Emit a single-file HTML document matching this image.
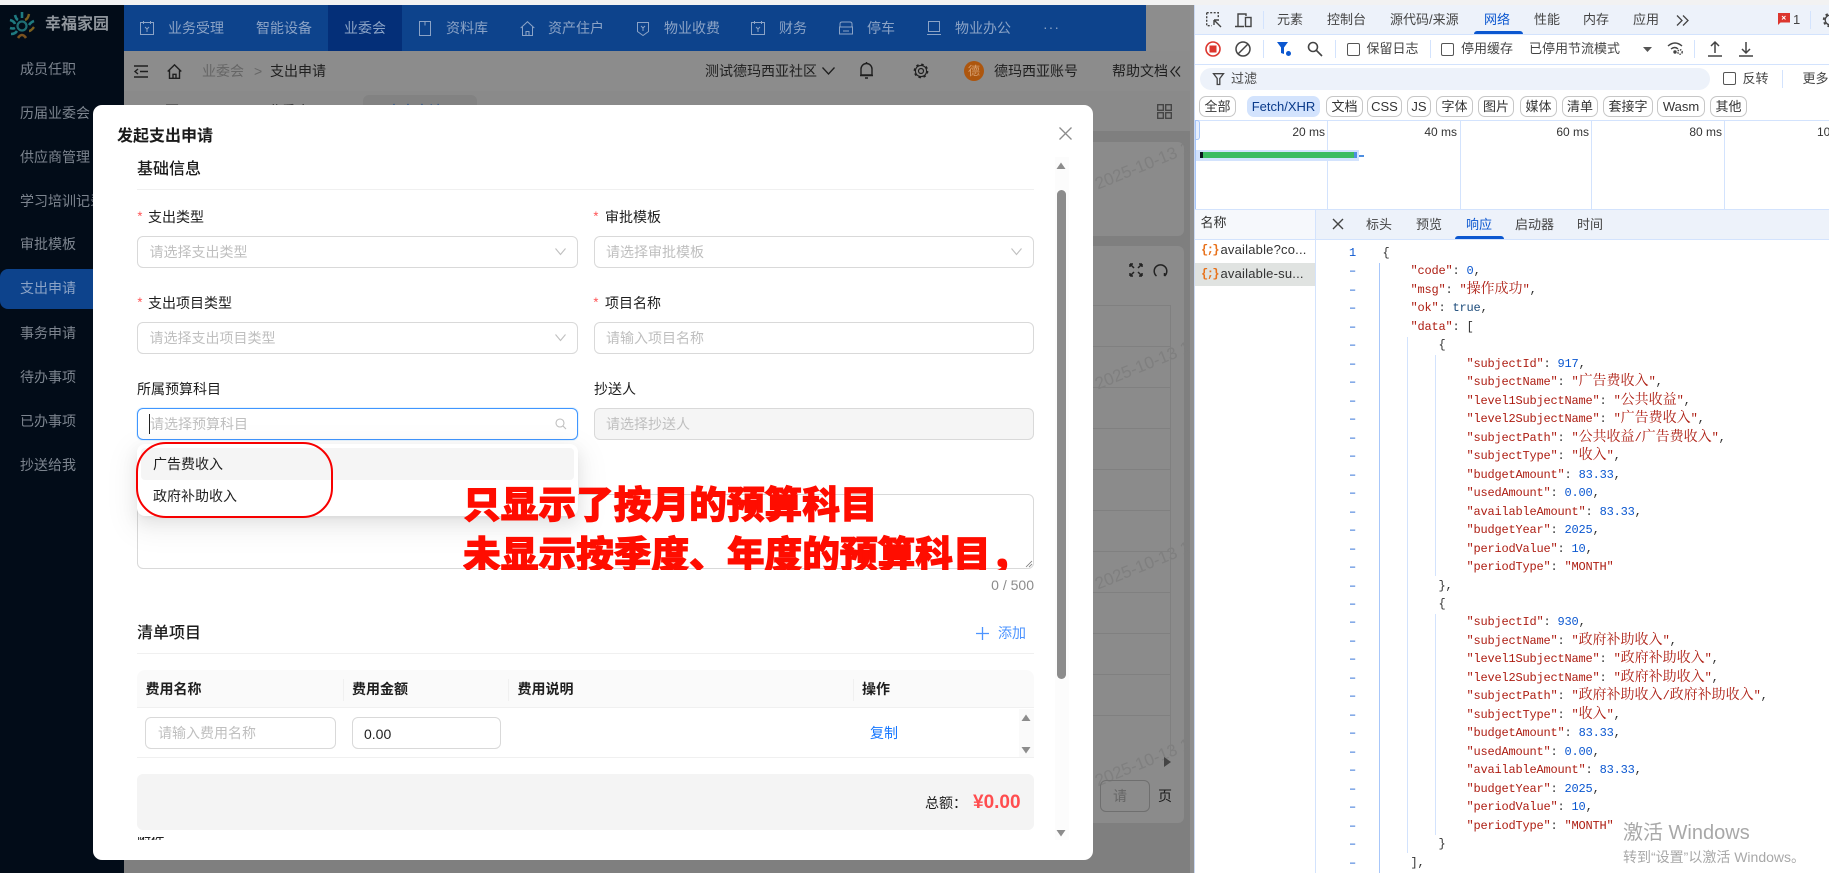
<!DOCTYPE html>
<html lang="zh-CN">
<head>
<meta charset="utf-8">
<title>发起支出申请</title>
<style>
*{box-sizing:border-box}
html,body{margin:0;padding:0;width:1829px;height:873px;overflow:hidden;background:#fff}
body{position:relative;font-family:"Liberation Sans","Noto Sans CJK SC",sans-serif;font-size:14px;color:#1f1f1f}
.a{position:absolute}
.t{position:absolute;line-height:20px;white-space:nowrap;height:20px}
svg{position:absolute;overflow:visible;fill:none}
.nav{color:#8ba3c6}
.side{color:#7d858f;left:20px}
.lab{color:#1d1d1d}
.star{color:#ff4d4f;font-family:"Liberation Mono",monospace;font-size:13px}
.ph{color:#bfbfbf}
.in{position:absolute;border:1px solid #d9d9d9;border-radius:6px;background:#fff}
.chip{position:absolute;top:96px;height:21px;border:1px solid #c7c7c7;border-radius:7px;font-size:13px;line-height:19px;text-align:center;color:#333;background:#fff;white-space:nowrap}
.tab{position:absolute;line-height:18px;font-size:13px;color:#444;white-space:nowrap}
.code{position:absolute;margin:0;font-family:"Liberation Mono","Noto Serif CJK SC",monospace;font-size:12px;letter-spacing:-.2px;line-height:18.48px;color:#333;white-space:pre}
.code i{font-style:normal;color:#ad1d12}
.code b{font-weight:400;color:#0b57d0}
.code u{text-decoration:none;font-family:"Noto Serif CJK SC",serif;font-size:14px;letter-spacing:0;color:#ad1d12;line-height:1}
.grid{position:absolute;top:120px;height:89px;width:1px;background:#d3e3fd}
.ms{position:absolute;top:124px;font-size:12px;line-height:16px;color:#333;text-align:right;white-space:nowrap}
.sep{position:absolute;width:1px;background:#d3e3fd}
.cb{position:absolute;width:13px;height:13px;border:1.5px solid #555;border-radius:2px;background:#fff}
.wm{position:absolute;left:1096px;line-height:20px;height:20px;white-space:nowrap;color:#7f7f7f;font-size:17px;transform:rotate(-22deg);transform-origin:left center}
</style>
</head>
<body>
<!-- page behind overlay -->
<div class="a" style="left:0;top:0;width:1829px;height:5px;background:#f2f2f2"></div>
<div class="a" style="left:124px;top:5px;width:1070px;height:868px;background:#7f7f7f"></div>
<div class="a" style="left:124px;top:51px;width:1070px;height:40px;background:#8c8c8c"></div>
<div class="a" style="left:124px;top:91px;width:1070px;height:40px;background:#8a8a8a"></div>
<div class="a" style="left:124px;top:5px;width:1022px;height:46px;background:#0d438c"></div>
<div class="a" style="left:1146px;top:5px;width:48px;height:46px;background:#8d8d8d"></div>
<div class="a" style="left:328px;top:5px;width:74px;height:46px;background:#042f78"></div>
<div class="a" style="left:363px;top:95px;width:114px;height:14px;border-radius:6px 6px 0 0;background:#828282"></div>
<div class="t" style="left:165px;top:101px;color:#333">页</div>
<div class="t" style="left:268px;top:101px;color:#333">业委会</div>
<div class="t" style="left:387px;top:101px;color:#1a4a8c">支出申请</div>
<div class="a" style="left:1000px;top:142px;width:184px;height:94px;background:#8b8b8b;border-radius:6px"></div>
<div class="a" style="left:1000px;top:246px;width:184px;height:577px;background:#8b8b8b;border-radius:6px"></div>
<!-- table lines -->
<div class="a" style="left:1000px;top:305px;width:171px;height:449px;border-right:1px solid #808080;background:repeating-linear-gradient(to bottom,#808080 0,#808080 1px,transparent 1px,transparent 41px)"></div>
<div class="wm" style="top:175px">2025-10-13 1</div>
<div class="wm" style="top:375px">2025-10-13 1</div>
<div class="wm" style="top:575px">2025-10-13 1</div>
<div class="wm" style="top:772px">2025-10-13 1</div>
<svg style="left:1162px;top:756px" width="10" height="12"><path d="M2 1L9 6L2 11Z" fill="#444"/></svg>
<div class="a" style="left:1100px;top:780px;width:50px;height:32px;border:1px solid #6f6f6f;border-radius:6px"></div>
<div class="t" style="left:1113px;top:786px;color:#666">请</div>
<div class="t" style="left:1158px;top:786px;color:#1b1b1b">页</div>
<svg style="left:1157px;top:104px" width="15" height="15" stroke="#404040" stroke-width="1.3"><rect x=".7" y=".7" width="5.6" height="5.6"/><rect x="8.7" y=".7" width="5.6" height="5.6"/><rect x=".7" y="8.7" width="5.6" height="5.6"/><rect x="8.7" y="8.7" width="5.6" height="5.6"/></svg>
<svg style="left:1129px;top:263px" width="14" height="14" stroke="#222" stroke-width="1.5"><path d="M1 1L5 5M1 1h3M1 1v3M13 1L9 5M13 1h-3M13 1v3M1 13L5 9M1 13h3M1 13v-3M13 13L9 9M13 13h-3M13 13v-3"/></svg>
<svg style="left:1153px;top:263px" width="15" height="15" stroke="#222" stroke-width="1.5"><path d="M3.5 13A6.3 6.3 0 1 1 11.5 13M11.5 13V10"/></svg>

<!-- sidebar -->
<div class="a" style="left:0;top:5px;width:124px;height:868px;background:#020c18"></div>
<svg style="left:8px;top:11px" width="30" height="30" viewBox="0 0 30 30">
<circle cx="14" cy="15" r="4.5" stroke="#1f6e74" stroke-width="2.2"/>
<path d="M14 1v6" stroke="#1f7a80" stroke-width="2.6"/>
<path d="M7 4q1 4 3 5" stroke="#1f7a80" stroke-width="2.6"/>
<path d="M21 3q-1 5-4 6" stroke="#7a5f1f" stroke-width="2.4"/>
<path d="M2 9q4 1 5 4" stroke="#1f7a80" stroke-width="2.6"/>
<path d="M26 10q-3 1-5 4" stroke="#1f7a80" stroke-width="2.6"/>
<path d="M2 17q3 1 5 0" stroke="#1f7a80" stroke-width="2.6"/>
<path d="M3 23q4 0 6-3" stroke="#1f7a80" stroke-width="2.6"/>
<path d="M26 16q-3 4-5 4" stroke="#7a5f1f" stroke-width="2.4"/>
<path d="M10 27q2-3 4-3t4 3" stroke="#7a521f" stroke-width="2.6"/>
</svg>
<div class="t" style="left:45px;top:15px;color:#8f959c;font-size:16px;font-weight:700">幸福家园</div>
<div class="a" style="left:0;top:269px;width:124px;height:40px;background:#0d438c;border-radius:8px 0 0 8px"></div>
<div class="t side" style="top:59px">成员任职</div>
<div class="t side" style="top:103px">历届业委会</div>
<div class="t side" style="top:147px">供应商管理</div>
<div class="t side" style="top:191px">学习培训记录</div>
<div class="t side" style="top:234px">审批模板</div>
<div class="t side" style="top:278px;color:#8ba3c6">支出申请</div>
<div class="t side" style="top:323px">事务申请</div>
<div class="t side" style="top:367px">待办事项</div>
<div class="t side" style="top:411px">已办事项</div>
<div class="t side" style="top:455px">抄送给我</div>

<!-- top nav -->
<svg style="left:140px;top:21px" width="14" height="14" stroke="#8ba3c6"><rect x=".5" y="1.5" width="13" height="12"/><path d="M3.5 0v3M10.5 0v3M5 6l2 2 2-2M7 8v3"/></svg>
<div class="t nav" style="left:168px;top:18px">业务受理</div>
<div class="t nav" style="left:256px;top:18px">智能设备</div>
<div class="t nav" style="left:344px;top:18px">业委会</div>
<svg style="left:419px;top:21px" width="12" height="15" stroke="#8ba3c6"><rect x=".5" y=".5" width="11" height="14"/><path d="M6 .5v4"/></svg>
<div class="t nav" style="left:446px;top:18px">资料库</div>
<svg style="left:520px;top:21px" width="15" height="15" stroke="#8ba3c6"><path d="M.7 7L7.5.7 14.3 7M2.5 6v8.500h10V6M6 14.500v-4h3v4"/></svg>
<div class="t nav" style="left:548px;top:18px">资产住户</div>
<svg style="left:637px;top:21px" width="12" height="15" stroke="#8ba3c6"><path d="M.5 1.500h11v9l-5.500 4-5.500-4z"/><path d="M4 5l2 2 2-2M6 7v3"/></svg>
<div class="t nav" style="left:664px;top:18px">物业收费</div>
<svg style="left:751px;top:21px" width="14" height="14" stroke="#8ba3c6"><rect x=".5" y="1.5" width="13" height="12"/><path d="M3.500 0v3M10.500 0v3M5 6l2 2 2-2M7 8v3"/></svg>
<div class="t nav" style="left:779px;top:18px">财务</div>
<svg style="left:839px;top:21px" width="14" height="14" stroke="#8ba3c6"><path d="M1 6V3q0-2 2-2h8q2 0 2 2v3M.5 6h13v7H.5zM4 10h6"/></svg>
<div class="t nav" style="left:867px;top:18px">停车</div>
<svg style="left:927px;top:21px" width="14" height="14" stroke="#8ba3c6"><rect x="1.500" y=".5" width="11" height="10"/><path d="M0 13.500h14"/></svg>
<div class="t nav" style="left:955px;top:18px">物业办公</div>
<div class="t nav" style="left:1043px;top:17px;letter-spacing:1px">···</div>

<!-- breadcrumb bar -->
<svg style="left:134px;top:65px" width="14" height="13" stroke="#1f1f1f" stroke-width="1.4"><path d="M0 1h14M6 6.500h8M0 12h14M4 4L1 6.500 4 9"/></svg>
<svg style="left:167px;top:64px" width="15" height="15" stroke="#1f1f1f" stroke-width="1.4"><path d="M.7 7.500L7.500 .9 14.300 7.500M2.500 6v8.300h10V6M6 14.300v-4h3v4"/></svg>
<div class="t" style="left:202px;top:61px;color:#666">业委会</div>
<div class="t" style="left:254px;top:61px;color:#666">&gt;</div>
<div class="t" style="left:270px;top:61px;color:#1f1f1f">支出申请</div>
<div class="t" style="left:705px;top:61px">测试德玛西亚社区</div>
<svg style="left:822px;top:67px" width="13" height="8" stroke="#1f1f1f" stroke-width="1.3"><path d="M.5 .5L6.500 7 12.500 .5"/></svg>
<svg style="left:860px;top:62px" width="13" height="17" stroke="#1f1f1f" stroke-width="1.4"><path d="M1 13V7a5.500 5.500 0 0 1 11 0v6zM0 13.500h13M6.500 0v1.500M5 16h3"/></svg>
<svg style="left:913px;top:63px" width="16" height="16" stroke="#1f1f1f"><circle cx="8" cy="8" r="5.600" stroke-width="1.100"/><circle cx="8" cy="8" r="6.600" stroke-width="1.500" stroke-dasharray="2.500 2.680"/><circle cx="8" cy="8" r="2.500" stroke-width="1.200"/></svg>
<div class="a" style="left:964px;top:61px;width:20px;height:20px;border-radius:50%;background:#ad560e;color:#d8a070;font-size:12px;line-height:20px;text-align:center">德</div>
<div class="t" style="left:994px;top:61px">德玛西亚账号</div>
<div class="t" style="left:1112px;top:61px">帮助文档</div>
<svg style="left:1170px;top:66px" width="11" height="11" stroke="#1f1f1f" stroke-width="1.2"><path d="M5 .5L.8 5.500 5 10.500M10 .5L5.800 5.500 10 10.500"/></svg>

<!-- modal -->
<div class="a" style="left:93px;top:105px;width:1000px;height:755px;background:#fff;border-radius:9px"></div>
<div class="t" style="left:117px;top:127px;font-size:16px;font-weight:700;color:#1a1a1a">发起支出申请</div>
<svg style="left:1059px;top:127px" width="13" height="13" stroke="#8c8c8c" stroke-width="1.300"><path d="M.5 .5L12.500 12.500M12.500 .5L.5 12.500"/></svg>
<!-- modal scrollbar -->
<div class="a" style="left:1055px;top:157px;width:14px;height:683px;background:#fcfcfc"></div>
<div class="a" style="left:1057px;top:190px;width:9px;height:489px;background:#8c8c8c;border-radius:4.500px"></div>
<svg style="left:1056px;top:162px" width="10" height="8"><path d="M5 .5L9.500 7H.5z" fill="#8c8c8c"/></svg>
<svg style="left:1056px;top:829px" width="10" height="8"><path d="M5 7.500L9.500 1H.5z" fill="#8c8c8c"/></svg>

<div class="t" style="left:137px;top:160px;font-size:16px;font-weight:500;color:#1a1a1a">基础信息</div>
<div class="a" style="left:137px;top:189px;width:897px;height:1px;background:#f0f0f0"></div>

<div class="t star" style="left:136px;top:208px">*</div><div class="t lab" style="left:148px;top:207px">支出类型</div>
<div class="t star" style="left:592px;top:208px">*</div><div class="t lab" style="left:605px;top:207px">审批模板</div>
<div class="in" style="left:137px;top:236px;width:441px;height:32px"></div>
<div class="t ph" style="left:149.500px;top:242px">请选择支出类型</div>
<svg style="left:555px;top:248px" width="11" height="8" stroke="#bfbfbf" stroke-width="1.100"><path d="M.5 .5L5.500 6.500 10.500 .5"/></svg>
<div class="in" style="left:594px;top:236px;width:440px;height:32px"></div>
<div class="t ph" style="left:606px;top:242px">请选择审批模板</div>
<svg style="left:1011px;top:248px" width="11" height="8" stroke="#bfbfbf" stroke-width="1.100"><path d="M.5 .5L5.500 6.500 10.500 .5"/></svg>

<div class="t star" style="left:136px;top:294px">*</div><div class="t lab" style="left:148px;top:293px">支出项目类型</div>
<div class="t star" style="left:592px;top:294px">*</div><div class="t lab" style="left:605px;top:293px">项目名称</div>
<div class="in" style="left:137px;top:322px;width:441px;height:32px"></div>
<div class="t ph" style="left:149.500px;top:328px">请选择支出项目类型</div>
<svg style="left:555px;top:334px" width="11" height="8" stroke="#bfbfbf" stroke-width="1.100"><path d="M.5 .5L5.500 6.500 10.500 .5"/></svg>
<div class="in" style="left:594px;top:322px;width:440px;height:32px"></div>
<div class="t ph" style="left:606px;top:328px">请输入项目名称</div>

<div class="t lab" style="left:137px;top:379px">所属预算科目</div>
<div class="t lab" style="left:594px;top:379px">抄送人</div>
<div class="in" style="left:137px;top:408px;width:441px;height:32px;border-color:#4096ff;box-shadow:0 0 0 1px rgba(5,145,255,.1)"></div>
<div class="a" style="left:149px;top:414px;width:1px;height:20px;background:#222"></div>
<div class="t ph" style="left:150px;top:414px">请选择预算科目</div>
<svg style="left:555px;top:418px" width="11" height="12" stroke="#bfbfbf" stroke-width="1.100"><circle cx="5" cy="5" r="4"/><path d="M8 8l3 3"/></svg>
<div class="in" style="left:594px;top:408px;width:440px;height:32px;background:#f5f5f5"></div>
<div class="t ph" style="left:606px;top:414px">请选择抄送人</div>

<!-- textarea -->
<div class="in" style="left:137px;top:494px;width:897px;height:75px"></div>
<svg style="left:1025px;top:560px" width="8" height="8" stroke="#777" stroke-width=".8"><path d="M1 7L7 1M4 7L7 4"/></svg>
<div class="t" style="left:960px;top:575px;width:74px;text-align:right;color:#8c8c8c">0 / 500</div>

<!-- dropdown -->
<div class="a" style="left:137px;top:444px;width:441px;height:72px;background:#fff;border-radius:8px;box-shadow:0 6px 16px rgba(0,0,0,.08),0 3px 6px -4px rgba(0,0,0,.12),0 9px 28px 8px rgba(0,0,0,.05)"></div>
<div class="a" style="left:141px;top:448px;width:433px;height:32px;background:#f5f5f5;border-radius:4px"></div>
<div class="t" style="left:153px;top:454px;color:#1f1f1f">广告费收入</div>
<div class="t" style="left:153px;top:486px;color:#1f1f1f">政府补助收入</div>
<div class="a" style="left:136px;top:442px;width:197px;height:76px;border:2.500px solid #f70000;border-radius:30px"></div>

<!-- red text -->
<div class="a" style="left:463px;top:477px;font-size:37.700px;line-height:49.500px;font-weight:900;color:#ff0d00;font-family:'Noto Sans CJK SC',sans-serif;white-space:nowrap;-webkit-text-stroke:1px #ff0d00;height:93px;overflow:hidden">只显示了按月的预算科目<br>未显示按季度、年度的预算科目，</div>

<!-- list -->
<div class="t" style="left:137px;top:624px;font-size:16px;font-weight:500;color:#1a1a1a">清单项目</div>
<svg style="left:976px;top:627px" width="13" height="13" stroke="#4d94ff" stroke-width="1.300"><path d="M6.500 0v13M0 6.500h13"/></svg>
<div class="t" style="left:998px;top:623px;color:#4d94ff">添加</div>
<div class="a" style="left:137px;top:653px;width:897px;height:1px;background:#f0f0f0"></div>
<div class="a" style="left:137px;top:670px;width:897px;height:38px;background:#fafafa;border-radius:8px 8px 0 0;border-bottom:1px solid #f0f0f0"></div>
<div class="a" style="left:343px;top:679px;width:1px;height:22px;background:#f0f0f0"></div>
<div class="a" style="left:508px;top:679px;width:1px;height:22px;background:#f0f0f0"></div>
<div class="a" style="left:853px;top:679px;width:1px;height:22px;background:#f0f0f0"></div>
<div class="t" style="left:145.500px;top:679px;font-weight:700;color:#1f1f1f">费用名称</div>
<div class="t" style="left:352px;top:679px;font-weight:700;color:#1f1f1f">费用金额</div>
<div class="t" style="left:517.500px;top:679px;font-weight:700;color:#1f1f1f">费用说明</div>
<div class="t" style="left:862px;top:679px;font-weight:700;color:#1f1f1f">操作</div>
<div class="in" style="left:145px;top:717px;width:191px;height:32px"></div>
<div class="t ph" style="left:158px;top:723px">请输入费用名称</div>
<div class="in" style="left:352px;top:717px;width:149px;height:32px"></div>
<div class="t" style="left:364px;top:724px;color:#1f1f1f">0.00</div>
<div class="t" style="left:870px;top:723px;color:#1677ff">复制</div>
<div class="a" style="left:137px;top:757px;width:897px;height:1px;background:#f0f0f0"></div>
<div class="a" style="left:1019px;top:709px;width:15px;height:48px;background:#fafafa"></div>
<svg style="left:1021px;top:714px" width="10" height="8"><path d="M5 .5L9.500 7H.5z" fill="#8c8c8c"/></svg>
<svg style="left:1021px;top:746px" width="10" height="8"><path d="M5 7.500L9.500 1H.5z" fill="#8c8c8c"/></svg>
<div class="a" style="left:137px;top:774px;width:897px;height:56px;background:#f4f4f4;border-radius:6px"></div>
<div class="t" style="left:925px;top:793px;color:#1f1f1f">总额：</div>
<div class="t" style="left:973px;top:793px;font-size:19px;font-weight:700;color:#ff4d4f">¥0.00</div>
<div class="a" style="left:137px;top:837px;width:40px;height:3px;overflow:hidden"><div style="position:absolute;top:-6px;left:0;line-height:20px;font-size:14px;color:#1f1f1f;white-space:nowrap">附件</div></div>

<!-- devtools -->
<div class="a" style="left:1190px;top:5px;width:4px;height:868px;background:#8f8f8f"></div>
<div class="a" style="left:1194px;top:5px;width:635px;height:868px;background:#fff;border-left:1px solid #c9d8f2"></div>
<div class="a" style="left:1195px;top:5px;width:634px;height:29px;background:#edf2fa"></div>
<div class="a" style="left:1195px;top:34px;width:634px;height:1px;background:#d3e3fd"></div>
<div class="a" style="left:1195px;top:64px;width:634px;height:1px;background:#d3e3fd"></div>
<div class="a" style="left:1195px;top:120px;width:634px;height:1px;background:#d3e3fd"></div>
<div class="a" style="left:1195px;top:209px;width:634px;height:1px;background:#d3e3fd"></div>

<svg style="left:1206px;top:12px" width="16" height="16" stroke="#444" stroke-width="1.400"><path d="M.7 .7h11.600v5M.7 .7v13h5" stroke-dasharray="2 1.500"/><path d="M15 15L8 8M8 8v5M8 8h5"/></svg>
<svg style="left:1235px;top:13px" width="17" height="15" stroke="#444" stroke-width="1.400"><path d="M3 13V1h8v2M0 13.500h9"/><rect x="10.500" y="4.500" width="5.500" height="9"/></svg>
<div class="sep" style="left:1263px;top:11px;height:18px"></div>
<div class="tab" style="left:1277px;top:11px">元素</div>
<div class="tab" style="left:1327px;top:11px">控制台</div>
<div class="tab" style="left:1390px;top:11px">源代码/来源</div>
<div class="tab" style="left:1484px;top:11px;color:#0b57d0">网络</div>
<div class="tab" style="left:1534px;top:11px">性能</div>
<div class="tab" style="left:1583px;top:11px">内存</div>
<div class="tab" style="left:1633px;top:11px">应用</div>
<div class="a" style="left:1474px;top:31px;width:49px;height:3px;background:#0b57d0;border-radius:3px 3px 0 0"></div>
<svg style="left:1676px;top:15px" width="13" height="11" stroke="#444" stroke-width="1.300"><path d="M1 .5L6 5.500 1 10.500M7 .5L12 5.500 7 10.500"/></svg>
<svg style="left:1778px;top:13px" width="12" height="12"><path d="M0 0h12v9.500H0z" fill="#dc362e"/><path d="M0 9l0 3 3-3z" fill="#dc362e"/><path d="M4 3l3.500 3.500M7.500 3L4 6.500" stroke="#fff"/></svg>
<div class="tab" style="left:1793px;top:11px">1</div>
<div class="sep" style="left:1810px;top:11px;height:18px"></div>
<svg style="left:1823px;top:12px" width="12" height="16" stroke="#444"><circle cx="7" cy="8" r="4.800" stroke-width="1.300"/><circle cx="7" cy="8" r="6.300" stroke-width="1.800" stroke-dasharray="2.500 2.450"/></svg>

<svg style="left:1205px;top:41px" width="16" height="16"><circle cx="8" cy="8" r="7" stroke="#dc362e" stroke-width="1.600" fill="#fff"/><rect x="4.500" y="4.500" width="7" height="7" fill="#dc362e"/></svg>
<svg style="left:1235px;top:41px" width="16" height="16" stroke="#444" stroke-width="1.500"><circle cx="8" cy="8" r="7"/><path d="M3 13L13 3"/></svg>
<div class="sep" style="left:1263px;top:40px;height:18px"></div>
<svg style="left:1277px;top:42px" width="15" height="15"><path d="M0 0h11L7 5.500V12L4 11V5.500z" fill="#0b57d0"/><circle cx="11.500" cy="11.500" r="2.500" fill="#0b57d0"/></svg>
<svg style="left:1307px;top:41px" width="16" height="16" stroke="#444" stroke-width="1.600"><circle cx="6" cy="6" r="4.500"/><path d="M9.500 9.500L15 15"/></svg>
<div class="sep" style="left:1335px;top:40px;height:18px"></div>
<div class="cb" style="left:1347px;top:43px"></div>
<div class="tab" style="left:1366.500px;top:40px">保留日志</div>
<div class="sep" style="left:1430px;top:40px;height:18px"></div>
<div class="cb" style="left:1441px;top:43px"></div>
<div class="tab" style="left:1461px;top:40px">停用缓存</div>
<div class="tab" style="left:1529px;top:40px">已停用节流模式</div>
<svg style="left:1643px;top:47px" width="9" height="5"><path d="M0 0h9L4.500 5z" fill="#555"/></svg>
<svg style="left:1667px;top:41px" width="17" height="15" stroke="#444" stroke-width="1.400"><path d="M1 5Q8-1 15 5M4 8q4-3 7 0"/><circle cx="8" cy="11" r="1" fill="#444"/><circle cx="13" cy="11" r="2.200" stroke-dasharray="1.500 1"/></svg>
<div class="sep" style="left:1694px;top:40px;height:18px"></div>
<svg style="left:1708px;top:41px" width="14" height="16" stroke="#444" stroke-width="1.500"><path d="M7 12V1M3 5l4-4 4 4M0 15h14"/></svg>
<svg style="left:1739px;top:41px" width="14" height="16" stroke="#444" stroke-width="1.500"><path d="M7 1v11M3 8l4 4 4-4M0 15h14"/></svg>

<div class="a" style="left:1200px;top:68px;width:510px;height:22px;border-radius:11px;background:#edf2fa"></div>
<svg style="left:1213px;top:73px" width="11" height="12" stroke="#444" stroke-width="1.300"><path d="M.5 .7h10L6.800 5.500V11.500H4.200V5.500z"/></svg>
<div class="tab" style="left:1231px;top:70px">过滤</div>
<div class="cb" style="left:1723px;top:72px"></div>
<div class="tab" style="left:1742.500px;top:70px">反转</div>
<div class="sep" style="left:1782px;top:70px;height:18px"></div>
<div class="tab" style="left:1802.500px;top:70px">更多</div>

<div class="chip" style="left:1199px;width:37px">全部</div>
<div class="chip" style="left:1247px;width:73px;background:#d3e3fd;border-color:#d3e3fd;color:#0a3a8a">Fetch/XHR</div>
<div class="chip" style="left:1326px;width:37px">文档</div>
<div class="chip" style="left:1367px;width:35px">CSS</div>
<div class="chip" style="left:1407px;width:24px">JS</div>
<div class="chip" style="left:1436px;width:37px">字体</div>
<div class="chip" style="left:1478px;width:36px">图片</div>
<div class="chip" style="left:1520px;width:37px">媒体</div>
<div class="chip" style="left:1562px;width:36px">清单</div>
<div class="chip" style="left:1603px;width:50px">套接字</div>
<div class="chip" style="left:1657px;width:48px">Wasm</div>
<div class="chip" style="left:1710px;width:37px">其他</div>

<div class="grid" style="left:1327px"></div><div class="grid" style="left:1460px"></div><div class="grid" style="left:1591px"></div><div class="grid" style="left:1724px"></div>
<div class="ms" style="left:1270px;width:55px">20 ms</div>
<div class="ms" style="left:1402px;width:55px">40 ms</div>
<div class="ms" style="left:1534px;width:55px">60 ms</div>
<div class="ms" style="left:1667px;width:55px">80 ms</div>
<div class="ms" style="left:1817px;text-align:left">100 ms</div>
<div class="a" style="left:1195px;top:120px;width:5px;height:20px;border:1px solid #a8c7fa;border-left:0;border-radius:0 3px 3px 0;background:#e8f0fe"></div>
<div class="a" style="left:1195px;top:120px;width:1px;height:89px;background:#a8c7fa"></div>
<div class="a" style="left:1196px;top:150px;width:163px;height:11px;background:#d3e3fd"></div>
<div class="a" style="left:1200px;top:152px;width:155px;height:6px;background:#3cbc60"></div>
<div class="a" style="left:1200px;top:152px;width:3px;height:6px;background:#0b1a1f"></div>
<div class="a" style="left:1354px;top:152px;width:3px;height:6px;background:#4d8ee0"></div>
<div class="a" style="left:1359px;top:155px;width:5px;height:2px;background:#4d8ee0"></div>

<!-- request list -->
<div class="a" style="left:1195px;top:210px;width:121px;height:29px;background:#f6f8fc"></div>
<div class="a" style="left:1315px;top:210px;width:1px;height:663px;background:#d3e3fd"></div>
<div class="a" style="left:1195px;top:239px;width:634px;height:1px;background:#d3e3fd"></div>
<div class="tab" style="left:1200.500px;top:214px;color:#333">名称</div>
<div class="a" style="left:1195px;top:263px;width:120px;height:23px;background:#e0e3e1"></div>
<div class="tab" style="left:1201px;top:241px;color:#e8711a;font-family:'Liberation Mono',monospace;font-size:12px;font-weight:700;letter-spacing:-1.500px">{;}</div>
<div class="tab" style="left:1201px;top:265px;color:#e8711a;font-family:'Liberation Mono',monospace;font-size:12px;font-weight:700;letter-spacing:-1.500px">{;}</div>
<div class="tab" style="left:1220.500px;top:241px;color:#333;letter-spacing:.2px">available?co...</div>
<div class="tab" style="left:1220.500px;top:265px;color:#333;letter-spacing:.2px">available-su...</div>

<!-- details tabs -->
<div class="a" style="left:1316px;top:210px;width:513px;height:29px;background:#edf2fa"></div>
<svg style="left:1333px;top:219px" width="10" height="10" stroke="#444" stroke-width="1.400"><path d="M0 0L10 10M10 0L0 10"/></svg>
<div class="tab" style="left:1366px;top:216px">标头</div>
<div class="tab" style="left:1416px;top:216px">预览</div>
<div class="tab" style="left:1466px;top:216px;color:#0b57d0">响应</div>
<div class="tab" style="left:1515px;top:216px">启动器</div>
<div class="tab" style="left:1577px;top:216px">时间</div>
<div class="a" style="left:1455px;top:236px;width:49px;height:3px;background:#0b57d0;border-radius:3px 3px 0 0"></div>

<div class="a" style="left:1379px;top:263px;width:1px;height:610px;background:#a8c7fa"></div>
<div class="a" style="left:1407px;top:337px;width:1px;height:516px;background:#d3e3fd"></div>
<div class="a" style="left:1435px;top:355px;width:1px;height:221px;background:#d3e3fd"></div>
<div class="a" style="left:1435px;top:614px;width:1px;height:221px;background:#d3e3fd"></div>

<pre class="code" style="left:1349px;top:243.800px;color:#0b57d0;font-family:'Liberation Mono',monospace">1
–
–
–
–
–
–
–
–
–
–
–
–
–
–
–
–
–
–
–
–
–
–
–
–
–
–
–
–
–
–
–
–
–</pre>
<pre class="code" style="left:1382.500px;top:243.800px">{
    <i>"code"</i>: <b>0</b>,
    <i>"msg"</i>: <i>"</i><u>操作成功</u><i>"</i>,
    <i>"ok"</i>: <span style="color:#1a4a7a">true</span>,
    <i>"data"</i>: [
        {
            <i>"subjectId"</i>: <b>917</b>,
            <i>"subjectName"</i>: <i>"</i><u>广告费收入</u><i>"</i>,
            <i>"level1SubjectName"</i>: <i>"</i><u>公共收益</u><i>"</i>,
            <i>"level2SubjectName"</i>: <i>"</i><u>广告费收入</u><i>"</i>,
            <i>"subjectPath"</i>: <i>"</i><u>公共收益</u><i>/</i><u>广告费收入</u><i>"</i>,
            <i>"subjectType"</i>: <i>"</i><u>收入</u><i>"</i>,
            <i>"budgetAmount"</i>: <b>83.33</b>,
            <i>"usedAmount"</i>: <b>0.00</b>,
            <i>"availableAmount"</i>: <b>83.33</b>,
            <i>"budgetYear"</i>: <b>2025</b>,
            <i>"periodValue"</i>: <b>10</b>,
            <i>"periodType"</i>: <i>"MONTH"</i>
        },
        {
            <i>"subjectId"</i>: <b>930</b>,
            <i>"subjectName"</i>: <i>"</i><u>政府补助收入</u><i>"</i>,
            <i>"level1SubjectName"</i>: <i>"</i><u>政府补助收入</u><i>"</i>,
            <i>"level2SubjectName"</i>: <i>"</i><u>政府补助收入</u><i>"</i>,
            <i>"subjectPath"</i>: <i>"</i><u>政府补助收入</u><i>/</i><u>政府补助收入</u><i>"</i>,
            <i>"subjectType"</i>: <i>"</i><u>收入</u><i>"</i>,
            <i>"budgetAmount"</i>: <b>83.33</b>,
            <i>"usedAmount"</i>: <b>0.00</b>,
            <i>"availableAmount"</i>: <b>83.33</b>,
            <i>"budgetYear"</i>: <b>2025</b>,
            <i>"periodValue"</i>: <b>10</b>,
            <i>"periodType"</i>: <i>"MONTH"</i>
        }
    ],</pre>

<div class="t" style="left:1623px;top:823px;font-size:20px;color:#a8a8a8">激活 Windows</div>
<div class="t" style="left:1623px;top:847px;font-size:14px;color:#a8a8a8">转到“设置”以激活 Windows。</div>
</body>
</html>
